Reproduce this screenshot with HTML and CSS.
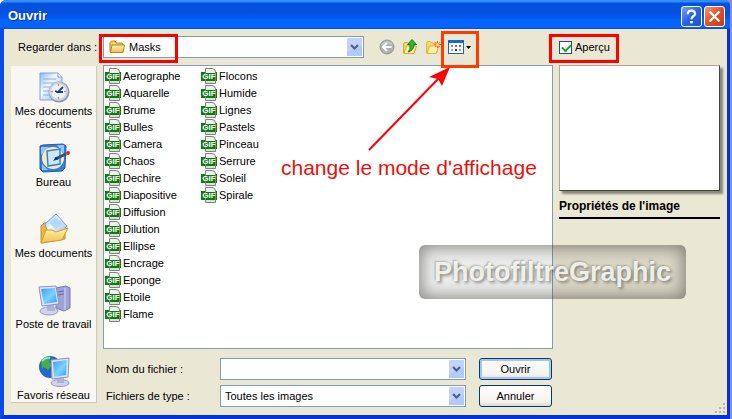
FILE: index.html
```
<!DOCTYPE html>
<html lang="fr">
  <head>
    <meta charset="utf-8">
    <title>Ouvrir</title>
    <link rel="stylesheet" href="styles.css">
  </head>
  <body>
    <svg class="defs" aria-hidden="true">
      <defs>
        <linearGradient id="screen" x1="0" y1="0" x2="1" y2="1">
          <stop offset="0" stop-color="#3f9df5"/>
          <stop offset=".55" stop-color="#7cd2ff"/>
          <stop offset="1" stop-color="#2c9cf2"/>
        </linearGradient>
        <linearGradient id="paper" x1="0" y1="0" x2="1" y2="1">
          <stop offset="0" stop-color="#8db9f2"/>
          <stop offset=".4" stop-color="#f2f8ff"/>
          <stop offset="1" stop-color="#8cb2ee"/>
        </linearGradient>
        <linearGradient id="folder" x1="0" y1="0" x2="0" y2="1">
          <stop offset="0" stop-color="#fff3a6"/>
          <stop offset="1" stop-color="#edc04e"/>
        </linearGradient>
      </defs>
      <symbol id="chevron" viewBox="0 0 15 18">
        <rect width="15" height="18" rx="1" fill="#c2d3fb"/>
        <path d="M0 14L15 7v11H0z" fill="#b3c9f8"/>
        <path d="M4 7l3.500 3.500L11 7" fill="none" stroke="#4d6185" stroke-width="2.200"/>
      </symbol>
    </svg>

    <div class="dialog">
      <header class="titlebar">
        <h1>Ouvrir</h1>
        <button class="caption-button help" aria-label="Aide">
          <svg viewBox="0 0 21 21"><path d="M6.500 8V6.500Q7 4 10.500 4T14.500 7.500Q14.500 9 12.500 10.200T10.500 13.500" fill="none" stroke="#fff" stroke-width="2.400"/><path d="M9 15.500h3v2.500H9z" fill="#fff"/></svg>
        </button>
        <button class="caption-button close" aria-label="Fermer">
          <svg viewBox="0 0 21 21"><path d="M5 5l11 11M16 5L5 16" stroke="#fff" stroke-width="2.600"/></svg>
        </button>
      </header>

      <main class="content">
        <label class="look-label" for="look">Regarder dans :</label>
        <div class="toolbar">
          <div class="combo look">
            <svg class="folder" viewBox="0 0 16 14"><path d="M1 12V2.500L2.500 1H6l1.500 2H13l1 1.500V12z" fill="#f3cf5f" stroke="#b5862a"/><path d="M1.500 12.500L3 5h12.500L14 12.500z" fill="url(#folder)" stroke="#b5862a"/></svg>
            <select id="look"><option>Masks</option></select>
            <svg class="arrow"><use href="#chevron"/></svg>
            <span class="mark"></span>
          </div>
          <button class="tool" aria-label="Précédent">
            <svg viewBox="0 0 16 16"><circle cx="8" cy="8" r="7" fill="#b0b0ac" stroke="#989894"/><path d="M3 6q4-5 10-1" fill="none" stroke="#cacac6" stroke-width="2"/><path d="M12.500 8H4.500M8 4L4 8l4 4" fill="none" stroke="#fff" stroke-width="2"/></svg>
          </button>
          <button class="tool" aria-label="Dossier parent">
            <svg viewBox="0 0 16 16"><path d="M1.500 14V5l1-1.500h3L7 5h5v9z" fill="#f6d871" stroke="#d3a83c"/><path d="M2 14.500L4.500 7h10L12 14.500z" fill="#fff0a0" stroke="#d3a83c"/><path d="M6 13q3-2 2-7.500H5.500L10 .500 14.500 5.500H12q0 6-6 7.500z" fill="#35b52e" stroke="#137a18"/></svg>
          </button>
          <button class="tool" aria-label="Nouveau dossier">
            <svg viewBox="0 0 16 16"><path d="M1.500 14V4l1-1.500h3L7 4h5v10z" fill="#f6d871" stroke="#d9b049"/><path d="M2 14.500L4.500 7H14l-3 7.500z" fill="#fff0a0" stroke="#d9b049"/><path d="M12.500 2v7M9 5.500h7M10 3l5 5M15 3l-5 5" stroke="#f26325"/><circle cx="12.500" cy="5.500" r="1.500" fill="#ffe174"/></svg>
          </button>
          <button class="tool views" aria-label="Affichage">
            <svg viewBox="0 0 16 16"><rect x=".500" y="1.500" width="15" height="13" fill="#fff" stroke="#1768c9"/><path d="M0 1h16v3H0z" fill="#1768c9"/><path d="M3 6h2v2H3z" fill="#4a9de0"/><path d="M11 6h2v2h-2z" fill="#3e9c4a"/><path d="M7 6h2v2H7z" fill="#8472b5"/><path d="M3 10h2v2H3z" fill="#e49a4b"/><path d="M7 10h2v2H7z" fill="#173d96"/><path d="M11 10h2v2h-2z" fill="#c79b20"/></svg>
            <svg class="caret" viewBox="0 0 5 3"><path d="M0 0h5L2.500 3z"/></svg>
            <span class="mark"></span>
          </button>
        </div>
        <div class="preview-toggle">
          <label><input type="checkbox" checked>Aperçu</label>
          <span class="mark"></span>
        </div>

        <nav class="places">
          <button>
            <svg viewBox="0 0 34 32"><path d="M3 2h18l4 4v23H3z" fill="url(#paper)" stroke="#7fa3dc"/><path d="M21 2v4h4" fill="#fff" stroke="#7fa3dc"/><path d="M6 8h13M6 12h11M6 16h7M6 20h6M6 24h6" stroke="#86aef0"/><circle cx="22" cy="21" r="10.500" fill="#8d98ac"/><circle cx="21.500" cy="20.500" r="8.500" fill="#e8f3fd" stroke="#c9d2df" stroke-width="2"/><path d="M21.500 13v2M21.500 26v2M14 20.500h2M27 20.500h2" stroke="#e38b5c" stroke-width="1.500"/><path d="M26 16l-5 5h5M21 21l-3-1" fill="none" stroke="#283e63" stroke-width="1.800"/></svg>
            Mes documents<br>récents
          </button>
          <button>
            <svg viewBox="0 0 34 32"><path d="M3 4l3-1 20-1 3 2-1 22-3 3-19 1-3-3z" fill="#347fd7" stroke="#2459a7"/><path d="M4 5h8L4 13zM20 3h7v9zM5 28v-6l6 6z" fill="#8fc6fb"/><circle cx="16" cy="16" r="11" fill="#f9eab3"/><path d="M10 9l13-2v15l-12 2z" fill="#cce9ff" stroke="#3980d0" stroke-width="1.500"/><path d="M18 17l11-5" stroke="#27528f" stroke-width="3"/><path d="M16 19l3-4 3 2z" fill="#16335f"/><circle cx="31" cy="11" r="2" fill="#cf3023"/></svg>
            Bureau
          </button>
          <button>
            <svg viewBox="0 0 34 32"><path d="M4 30V13l3-3h5l3 3 13 1v12z" fill="#eab83f" stroke="#c8922b"/><path d="M8 11L19 1l11 12-9 11-11-7z" fill="url(#paper)" stroke="#6fa3dd"/><path d="M12 10l7-6 7 7-7 5z" fill="#b0dbfb"/><path d="M4 30l5-13h6l4 2 12-4-6 12z" fill="url(#folder)" stroke="#d09c35"/></svg>
            Mes documents
          </button>
          <button>
            <svg viewBox="0 0 34 32"><path d="M19 4l10-2 4 2v20l-6 3-8-3z" fill="#9da3d5" stroke="#7479ad"/><path d="M28 4v22" stroke="#d4d7f0"/><path d="M21 8l6-1M21 11l6-1" stroke="#656ba6"/><ellipse cx="12" cy="27" rx="9" ry="4" fill="#d0d3ea" stroke="#969abf"/><path d="M10 21l7-1 1 7h-8z" fill="#adb2d7"/><path d="M2 3l17-1 3 18-17 2z" fill="#e0e4f7" stroke="#8b92c3"/><path d="M4 5l14-1 2 14-13 2z" fill="url(#screen)"/></svg>
            Poste de travail
          </button>
          <button>
            <svg viewBox="0 0 34 32"><circle cx="13" cy="12" r="11" fill="#2568ce"/><path d="M4 6q5-5 10-4l-2 5 3 3-4 5-4-3-2 2zM14 13l7-3v11l-6 1z" fill="#46af3f"/><path d="M5 6q4-4 8-3" fill="none" stroke="#9cdbc6" stroke-width="2"/><ellipse cx="23" cy="28" rx="9" ry="3.500" fill="#d0d3ea" stroke="#969abf"/><path d="M20 22h7v6h-7z" fill="#adb2d7"/><path d="M14 5l18-2-1 19-16 2z" fill="#e0e4f7" stroke="#8b92c3"/><path d="M16 7l14-2-1 15-12 2z" fill="url(#screen)"/></svg>
            Favoris réseau
          </button>
        </nav>

        <section class="files">
          <ul class="file-list">
            <li><span class="gif">GIF</span>Aerographe</li>
            <li><span class="gif">GIF</span>Aquarelle</li>
            <li><span class="gif">GIF</span>Brume</li>
            <li><span class="gif">GIF</span>Bulles</li>
            <li><span class="gif">GIF</span>Camera</li>
            <li><span class="gif">GIF</span>Chaos</li>
            <li><span class="gif">GIF</span>Dechire</li>
            <li><span class="gif">GIF</span>Diapositive</li>
            <li><span class="gif">GIF</span>Diffusion</li>
            <li><span class="gif">GIF</span>Dilution</li>
            <li><span class="gif">GIF</span>Ellipse</li>
            <li><span class="gif">GIF</span>Encrage</li>
            <li><span class="gif">GIF</span>Eponge</li>
            <li><span class="gif">GIF</span>Etoile</li>
            <li><span class="gif">GIF</span>Flame</li>
            <li><span class="gif">GIF</span>Flocons</li>
            <li><span class="gif">GIF</span>Humide</li>
            <li><span class="gif">GIF</span>Lignes</li>
            <li><span class="gif">GIF</span>Pastels</li>
            <li><span class="gif">GIF</span>Pinceau</li>
            <li><span class="gif">GIF</span>Serrure</li>
            <li><span class="gif">GIF</span>Soleil</li>
            <li><span class="gif">GIF</span>Spirale</li>
          </ul>
          <form class="fields">
            <label for="name">Nom du fichier :</label>
            <div class="combo">
              <input type="text" id="name">
              <svg class="arrow"><use href="#chevron"/></svg>
            </div>
            <button type="button" class="push default">Ouvrir</button>
            <label for="type">Fichiers de type :</label>
            <div class="combo">
              <select id="type"><option>Toutes les images</option></select>
              <svg class="arrow"><use href="#chevron"/></svg>
            </div>
            <button type="button" class="push">Annuler</button>
          </form>
        </section>

        <aside class="preview">
          <div class="preview-box"></div>
          <h2>Propriétés de l'image</h2>
        </aside>
      </main>

      <svg class="grip" viewBox="0 0 11 11"><path d="M8 0h2v2H8zM4 4h2v2H4zM8 4h2v2H8zM0 8h2v2H0zM4 8h2v2H4zM8 8h2v2H8z" fill="#b8b4a2"/></svg>

      <!-- annotations -->
      <svg class="pointer" viewBox="0 0 84 86"><path d="M1 84L72 11" stroke="#f00" stroke-width="2"/><path d="M82 1L74 20l-4-7-9-2z" fill="#f00"/></svg>
      <p class="note">change le mode d'affichage</p>
      <div class="watermark">PhotofiltreGraphic</div>
    </div>
  </body>
</html>
```
FILE: styles.css
```
*{
  box-sizing: border-box;
}
body{
  margin: 0;
  background: linear-gradient(to right, #fff 68px, #7f8fd8 68px);
  color: #000;
  font: 11px/13px "Liberation Sans", Arial, sans-serif;
}
button, input, select{
  font: inherit;
  color: inherit;
}
svg{
  display: block;
  flex: none;
}
.defs{
  position: absolute;
  width: 0;
  height: 0;
}
.dialog{
  position: relative;
  display: flex;
  flex-direction: column;
  min-height: calc(100vh - 1px);
  margin: 0 2px 1px 0;
  border: solid #0831d9;
  border-width: 0 3px 4px 4px;
  border-color: #0a4be8 #0831d9 #0831d9 #0a4be8;
  border-radius: 6px 6px 0 0;
  background: #ebe7d5;
}
/* title bar */
.titlebar{
  display: flex;
  align-items: center;
  gap: 2px;
  height: 29px;
  margin: 0 -3px 0 -4px;
  padding: 3px 5px 0 8px;
  border-radius: 6px 6px 0 0;
  background: linear-gradient(#2f8cf8 0, #2f8cf8 2px, #0552dd 3px, #0350df 12px, #0459ef 18px, #0464ff 20px, #0464ff 27px, #0350d8);
}
.titlebar h1{
  flex: 1;
  margin: 0;
  color: #fff;
  font-size: 13px;
  line-height: 16px;
  text-shadow: 1px 1px #0b2f99;
}
.caption-button{
  width: 21px;
  height: 21px;
  padding: 0;
  border: 1px solid #fff;
  border-radius: 3px;
}
.caption-button svg{
  width: 19px;
  height: 19px;
}
.help{
  background: linear-gradient(135deg, #7ba3f5, #2a63e0 50%, #1d51cc);
}
.close{
  background: linear-gradient(135deg, #f09a80, #e1502a 50%, #c93a12);
}
/* layout */
.content{
  flex: 1;
  display: grid;
  grid-template-columns: 86px 1fr 161px;
  grid-template-rows: 36px 1fr;
  column-gap: 6px;
  padding: 0 7px 8px 7px;
}
.look-label{
  align-self: center;
  text-align: right;
  white-space: nowrap;
}
.toolbar{
  display: flex;
  align-items: center;
  gap: 7px;
}
.combo{
  position: relative;
  height: 22px;
}
.combo select, .combo input{
  display: block;
  appearance: none;
  width: 100%;
  height: 100%;
  margin: 0;
  padding: 0 20px 0 4px;
  border: 1px solid #7f9db9;
  border-radius: 0;
  background: #fff;
}
.combo .arrow{
  position: absolute;
  top: 2px;
  right: 2px;
  width: 15px;
  height: 18px;
  pointer-events: none;
}
.look{
  flex: 0 1 261px;
  margin-right: 8px;
}
.look select{
  padding-left: 25px;
}
.look .folder{
  position: absolute;
  top: 4px;
  left: 6px;
  width: 16px;
  height: 14px;
}
.tool{
  position: relative;
  display: flex;
  align-items: center;
  gap: 2px;
  padding: 0;
  border: 0;
  background: none;
}
.tool svg{
  width: 16px;
  height: 16px;
}
.tool .caret{
  width: 5px;
  height: 3px;
}
.mark{
  position: absolute;
  border: 3px solid #f00;
  pointer-events: none;
}
.look .mark{
  top: -2px;
  left: -4px;
  width: 79px;
  height: 29px;
}
.views .mark{
  inset: -8px -8px -13px -7px;
  border-color: #ff3c00;
}
.preview-toggle{
  position: relative;
  display: flex;
  align-items: center;
}
.preview-toggle label{
  display: flex;
  align-items: center;
  gap: 3px;
}
.preview-toggle .mark{
  top: 5px;
  left: -10px;
  width: 70px;
  height: 29px;
}
.preview-toggle input{
  appearance: none;
  width: 13px;
  height: 13px;
  margin: 0;
  border: 1px solid #1c5180;
  background: #fff;
}
.preview-toggle input:checked::before{
  content: "";
  display: block;
  width: 7px;
  height: 4px;
  margin: 2px;
  border: solid #21a121;
  border-width: 0 0 2px 2px;
  transform: rotate(-45deg);
}
/* places bar */
.places{
  display: flex;
  flex-direction: column;
  margin: 1px 0 4px;
  padding-top: 5px;
  border: solid #cdc9b8;
  border-width: 0 1px 1px 0;
  background: #f8f7f2;
}
.places button{
  display: flex;
  flex-direction: column;
  align-items: center;
  height: 71px;
  padding: 0;
  border: 0;
  background: none;
  white-space: nowrap;
}
.places button:last-child{
  height: 47px;
}
.places svg{
  width: 34px;
  height: 32px;
  margin-bottom: 2px;
}
/* file list */
.files{
  display: flex;
  flex-direction: column;
}
.file-list{
  flex: 1;
  display: grid;
  grid-auto-flow: column;
  grid-template-rows: repeat(15, 17px);
  grid-auto-columns: 96px;
  margin: 0;
  padding: 2px 1px;
  border: 1px solid #7f9db9;
  background: #fff;
  list-style: none;
}
.file-list li{
  display: flex;
  align-items: center;
  gap: 2px;
}
.gif{
  position: relative;
  z-index: 0;
  width: 16px;
  height: 9px;
  background: #078007;
  color: #fff;
  font-size: 8px;
  font-weight: bold;
  line-height: 9px;
  text-align: center;
}
/* the sheet of paper behind the GIF band */
.gif::before{
  content: "";
  position: absolute;
  z-index: -1;
  inset: -4px 1px -3px 4px;
  border: 1px solid #808080;
  border-top-right-radius: 4px;
  background: linear-gradient(#f0f0f0 4px, #078007 4px, #078007 12px, #ddd 12px);
}
.fields{
  display: grid;
  grid-template-columns: 101px 1fr 73px;
  gap: 5px 13px;
  align-items: center;
  margin-top: 9px;
  padding: 0 1px 0 3px;
}
.push{
  height: 22px;
  padding: 0;
  border: 1px solid #003c74;
  border-radius: 3px;
  background: linear-gradient(#fff, #f3f2ec 80%, #dcd8cc);
}
.default{
  box-shadow: inset 0 0 0 2px #a9c2f0;
}
/* preview */
.preview-box{
  height: 126px;
  border: 1px solid #aca899;
  border-right-color: #444;
  border-bottom-color: #444;
  background: #fff;
  box-shadow: 3px 3px 2px #8a877c;
}
.preview h2{
  margin: 8px 0 0;
  padding-bottom: 4px;
  border-bottom: 2px solid #000;
  font-size: 12px;
  line-height: 14px;
}
.grip{
  position: absolute;
  right: 1px;
  bottom: 1px;
  width: 11px;
  height: 11px;
}
/* annotations */
.pointer{
  position: absolute;
  top: 66px;
  left: 364px;
  width: 84px;
  height: 86px;
}
.note{
  position: absolute;
  top: 156px;
  left: 277px;
  margin: 0;
  color: #e8120c;
  font-size: 21px;
  line-height: 24px;
  white-space: nowrap;
}
.watermark{
  position: absolute;
  top: 245px;
  left: 415px;
  padding: 0 15px;
  border-radius: 6px;
  background: rgba(90, 90, 80, .1);
  box-shadow: inset 0 0 16px 3px rgba(60, 60, 55, .55);
  color: rgba(255, 255, 248, .85);
  font-size: 27px;
  font-weight: bold;
  line-height: 54px;
  text-shadow: 2px 2px 3px rgba(60, 60, 60, .5), -1px -1px 2px rgba(70, 70, 70, .35);
}
```
